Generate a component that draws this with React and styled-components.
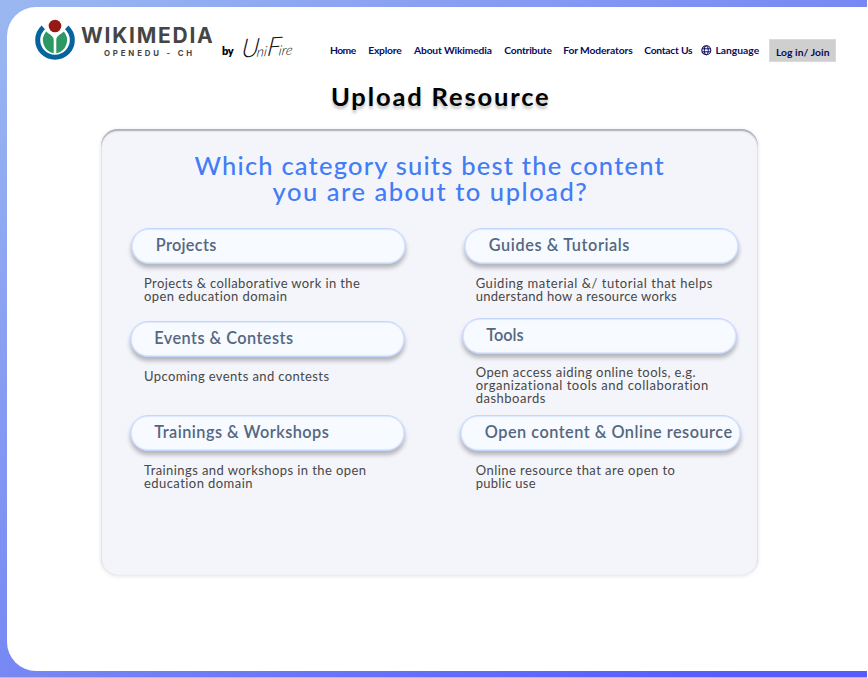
import React from "react";
import styled, { createGlobalStyle } from "styled-components";

const GlobalStyle = createGlobalStyle`
  * { box-sizing: border-box; }
  body {
    margin: 0;
    background: #fff;
    font-family: Lato, "Liberation Sans", sans-serif;
  }
  h1, h2, h3, p { margin: 0; font-weight: inherit; }
`;

const Backdrop = styled.div`
  width: 867px;
  height: 678px;
  padding: 7px 0 7px 7px;
  overflow: hidden;
  background: linear-gradient(to bottom right, #9bb8f1 0%, #7788f4 50%, #565bff 92%);
  border-bottom: 1px solid #b4b8fb;
`;

const Sheet = styled.div`
  height: 663.5px;
  background: #fff;
  border-radius: 29px 0 0 29px;
`;

const Header = styled.header`
  display: flex;
  align-items: flex-start;
  height: 72px;
`;

const Brand = styled.div`
  display: flex;
  width: 215px;
  padding: 10px 0 0 27px;
`;

const BrandWords = styled.div`
  display: flex;
  flex-direction: column;
  font-family: Inter, sans-serif;
  color: #454545;
  white-space: nowrap;
`;

const BrandName = styled.span`
  margin: 6px 0 0 5px;
  height: 26px;
  font-size: 21px;
  font-weight: 700;
  line-height: 26px;
  letter-spacing: 1.75px;
`;

const BrandSub = styled.span`
  margin: -1px 0 0 28px;
  font-size: 7.8px;
  font-weight: 700;
  line-height: 10px;
  letter-spacing: 2.85px;
`;

const By = styled.span`
  width: 17px;
  padding-top: 37px;
  font-size: 11px;
  font-weight: 800;
  line-height: 14px;
  letter-spacing: -0.3px;
  color: #000;
`;

const Signature = styled.span`
  display: flex;
  align-items: baseline;
  width: 59px;
  height: 32px;
  margin: 23px 32px 0 0;
  padding-left: 3px;
  font-size: 14px;
  font-style: italic;
  font-weight: 300;
  line-height: 32px;
  color: #111;
  transform: rotate(-3deg) skewX(-10deg);
`;

const Initial = styled.span`
  font-size: 26px;
  letter-spacing: -2px;
`;

const Nav = styled.nav`
  display: flex;
  padding-top: 36px;
  color: #0b0b5c;
  font-size: 10.3px;
  font-weight: 700;
  line-height: 15px;
  white-space: nowrap;
`;

const NavItem = styled.a`
  width: ${(p) => p.$width}px;
  letter-spacing: ${(p) => p.$spacing}px;
`;

const GlobeSlot = styled.span`
  display: flex;
  width: 14px;
  padding-top: 2px;
`;

const LoginButton = styled.button`
  width: 67px;
  height: 23px;
  margin-top: 31.5px;
  padding: 4px 0 0 5.5px;
  border: 1px solid #dadada;
  background: #cfcfcf;
  color: #0b0b5c;
  font: 700 10.3px/15px Lato, sans-serif;
  letter-spacing: 0.05px;
  text-align: left;
  white-space: nowrap;
`;

const PageTitle = styled.h1`
  margin: 1px 0 0 324px;
  color: #000;
  font-size: 25.5px;
  font-weight: 700;
  line-height: 32px;
  letter-spacing: 1.85px;
  white-space: nowrap;
  text-shadow: 0 3px 3px rgba(0, 0, 0, 0.25);
`;

const Card = styled.main`
  width: 657px;
  height: 446px;
  margin: 17px 0 0 94.3px;
  padding-top: 22.5px;
  border-radius: 17px;
  background: #f4f5fb;
  box-shadow:
    inset 0 2px 1.5px rgba(50, 50, 60, 0.36),
    inset 0 0 1px rgba(60, 60, 70, 0.18),
    0 1px 4px rgba(0, 0, 0, 0.12);
`;

const Question = styled.h2`
  display: flex;
  flex-direction: column;
  height: 76px;
  padding-left: 93.2px;
  color: #427df5;
  font-size: 25.5px;
  font-weight: 500;
  line-height: 26px;
  white-space: nowrap;
`;

const QuestionLine = styled.span`
  padding-left: ${(p) => p.$indent || 0}px;
  letter-spacing: ${(p) => p.$spacing}px;
`;

const Columns = styled.div`
  display: flex;
`;

const Column = styled.div`
  display: flex;
  flex-direction: column;
  width: ${(p) => p.$width}px;
`;

const Category = styled.section`
  height: ${(p) => p.$height}px;
`;

const Pill = styled.button`
  display: flex;
  align-items: center;
  width: ${(p) => p.$width || 275}px;
  height: 36px;
  margin-left: ${(p) => p.$offset}px;
  padding: 0 0 2px 23.5px;
  border: 1px solid #c5d6fe;
  border-radius: 18px;
  background: #f7faff;
  box-shadow:
    inset 0 0 1px 0.5px #c5d6fe,
    0 4px 4px rgba(0, 0, 0, 0.26);
  color: #54677f;
  font: 600 16.3px/20px Lato, sans-serif;
  letter-spacing: ${(p) => p.$spacing}px;
  white-space: nowrap;
`;

const Description = styled.p`
  display: flex;
  flex-direction: column;
  margin: ${(p) => p.$gap || 13}px 0 0 ${(p) => p.$left}px;
  color: #474747;
  font-size: 13px;
  line-height: 13px;
  white-space: nowrap;
`;

const DescriptionLine = styled.span`
  letter-spacing: ${(p) => p.$spacing}px;
`;

const navItems = [
  ["Home", 38.2, -0.55],
  ["Explore", 45.8, -0.2],
  ["About Wikimedia", 90.2, -0.17],
  ["Contribute", 59, -0.2],
  ["For Moderators", 81, -0.13],
  ["Contact Us", 57.3, -0.25],
];

const leftColumn = [
  {
    title: "Projects", height: 93, offset: 30, spacing: 0.3, left: 42.7,
    lines: [["Projects & collaborative work in the", 0.38], ["open education domain", 0.45]],
  },
  {
    title: "Events & Contests", height: 94.3, offset: 28.5, spacing: 0.45, left: 42.7,
    lines: [["Upcoming events and contests", 0.39]],
  },
  {
    title: "Trainings & Workshops", height: 100, offset: 28.5, spacing: 0.46, left: 42.7,
    lines: [["Trainings and workshops in the open", 0.42], ["education domain", 0.44]],
  },
];

const rightColumn = [
  {
    title: "Guides & Tutorials", height: 90.5, offset: 4, spacing: 0.58, left: 15.4,
    lines: [["Guiding material &/ tutorial that helps", 0.54], ["understand how a resource works", 0.3]],
  },
  {
    title: "Tools", height: 96.8, offset: 1.5, spacing: 0, left: 15.4, gap: 11.7,
    lines: [
      ["Open access aiding online tools, e.g.", 0.42],
      ["organizational tools and collaboration", 0.53],
      ["dashboards", 0.5],
    ],
  },
  {
    title: "Open content & Online resource", height: 100, offset: 0, width: 281, spacing: 0.49, left: 15.4,
    lines: [["Online resource that are open to", 0.46], ["public use", 0.29]],
  },
];

function WikimediaMark() {
  return (
    <svg width="42" height="44" viewBox="34 17 42 44" aria-hidden="true">
      <path d="M43.3 27.3 A17.3 17.3 0 1 0 66.7 27.3" fill="none" stroke="#05659b" strokeWidth="5" />
      <path d="M46.2 31.5 C49 34.2 53.7 35.8 53.7 40 V53.3 A13.3 13.3 0 0 1 46.2 31.5Z" fill="#2c9864" />
      <path d="M63.8 31.5 C61 34.2 56.3 35.8 56.3 40 V53.3 A13.3 13.3 0 0 0 63.8 31.5Z" fill="#2c9864" />
      <circle cx="55" cy="26" r="6.3" fill="#951a15" />
    </svg>
  );
}

function Globe() {
  return (
    <svg width="11" height="11" viewBox="0 0 11 11" fill="none" stroke="#0b0b5c" aria-hidden="true">
      <circle cx="5.3" cy="5.3" r="4.5" strokeWidth="1.1" />
      <ellipse cx="5.3" cy="5.3" rx="2" ry="4.5" />
      <path d="M1.2 3.8H9.4M1.2 6.8H9.4" />
    </svg>
  );
}

function CategoryList({ items, width }) {
  return (
    <Column $width={width}>
      {items.map((item) => (
        <Category key={item.title} $height={item.height}>
          <Pill $offset={item.offset} $width={item.width} $spacing={item.spacing}>
            {item.title}
          </Pill>
          <Description $left={item.left} $gap={item.gap}>
            {item.lines.map(([text, spacing]) => (
              <DescriptionLine key={text} $spacing={spacing}>{text}</DescriptionLine>
            ))}
          </Description>
        </Category>
      ))}
    </Column>
  );
}

export default function App() {
  return (
    <Backdrop>
      <GlobalStyle />
      <Sheet>
        <Header>
          <Brand>
            <WikimediaMark />
            <BrandWords>
              <BrandName>WIKIMEDIA</BrandName>
              <BrandSub>OPENEDU - CH</BrandSub>
            </BrandWords>
          </Brand>
          <By>by</By>
          <Signature>
            <Initial>U</Initial>ni<Initial>F</Initial>ire
          </Signature>
          <Nav>
            {navItems.map(([label, width, spacing]) => (
              <NavItem key={label} $width={width} $spacing={spacing}>{label}</NavItem>
            ))}
            <GlobeSlot><Globe /></GlobeSlot>
            <NavItem $width={54} $spacing={0}>Language</NavItem>
          </Nav>
          <LoginButton>Log in/ Join</LoginButton>
        </Header>
        <PageTitle>Upload Resource</PageTitle>
        <Card>
          <Question>
            <QuestionLine $spacing={1.2}>Which category suits best the content</QuestionLine>
            <QuestionLine $indent={78} $spacing={1.54}>you are about to upload?</QuestionLine>
          </Question>
          <Columns>
            <CategoryList items={leftColumn} width={359} />
            <CategoryList items={rightColumn} width={298} />
          </Columns>
        </Card>
      </Sheet>
    </Backdrop>
  );
}
